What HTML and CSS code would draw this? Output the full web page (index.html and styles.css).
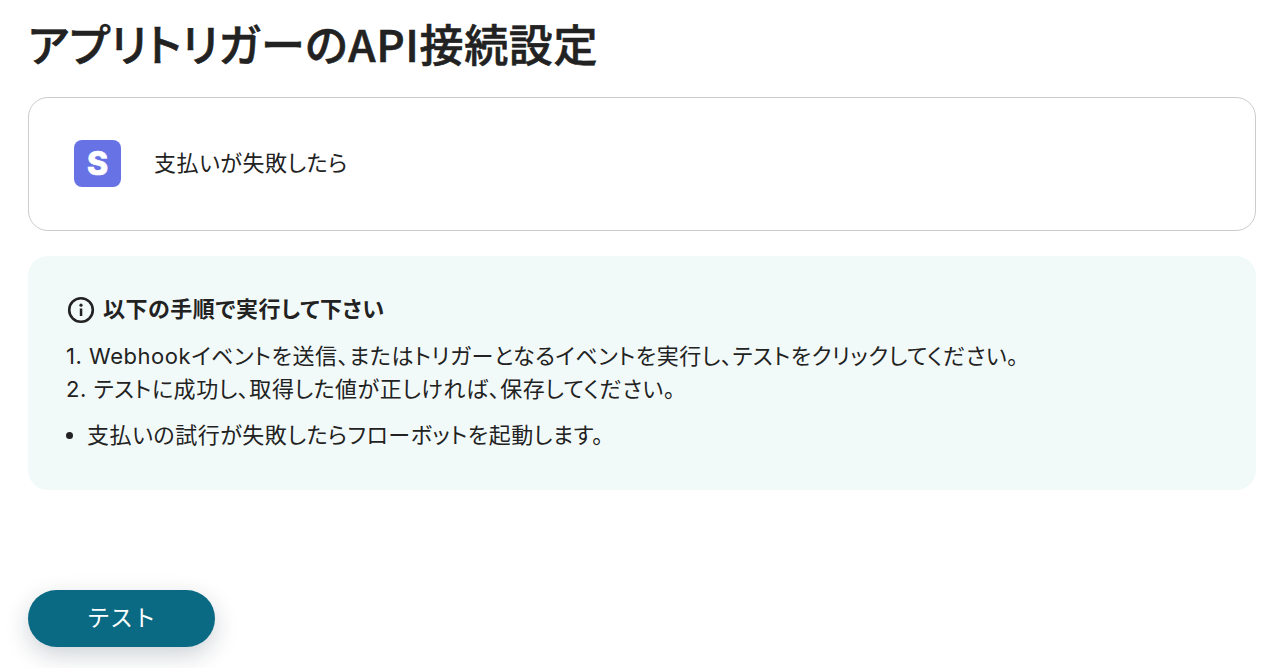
FILE: index.html
```html
<!doctype html>
<html lang="ja">
<head>
  <meta charset="utf-8">
  <title>アプリトリガーのAPI接続設定</title>
  <link rel="stylesheet" href="styles.css">
</head>
<body>
  <h1 class="page-title">アプリトリガーのAPI接続設定</h1>
  <div class="trigger-card">
    <div class="app-icon">S</div>
    <p class="trigger-name">支払いが失敗したら</p>
  </div>
  <div class="guide">
    <div class="guide-head">
      <svg class="info-icon" width="28" height="28" viewBox="0 0 28 28" fill="none">
        <circle cx="14" cy="14" r="11.8" stroke="#222" stroke-width="2.6"/>
        <rect x="12.8" y="12.5" width="2.5" height="7.5" fill="#222"/>
        <circle cx="14" cy="9.2" r="1.6" fill="#222"/>
      </svg>
      <span>以下の手順で実行して下さい</span>
    </div>
    <div class="guide-steps">
      <p>1. Webhookイベントを送信、またはトリガーとなるイベントを実行し、テストをクリックしてください。</p>
      <p>2. テストに成功し、取得した値が正しければ、保存してください。</p>
    </div>
    <ul class="guide-notes">
      <li>支払いの試行が失敗したらフローボットを起動します。</li>
    </ul>
  </div>
  <button class="test-btn" type="button">テスト</button>
</body>
</html>
```

FILE: styles.css
```css
html{
  background-color: #fff;
}
body{
  margin: 0;
  padding: 0 25px 0 28px;
  height: 668px;
  box-sizing: border-box;
  overflow: hidden;
  color: #222;
  font-family: Inter, "Noto Sans CJK JP", sans-serif;
  font-size: 22px;
  letter-spacing: 0.54px;
  font-feature-settings: "palt";
}
.page-title{
  margin: 0;
  padding-top: 13px;
  height: 97px;
  box-sizing: border-box;
  font-family: "Noto Sans CJK JP", sans-serif;
  font-size: 44px;
  line-height: 60px;
  font-weight: 500;
  -webkit-text-stroke: 0.6px #222;
  letter-spacing: 0.63px;
}
.trigger-card{
  display: flex;
  align-items: center;
  gap: 33px;
  height: 134px;
  box-sizing: border-box;
  padding-left: 45px;
  border: 1px solid #ccc;
  border-radius: 20px;
}
.app-icon{
  display: flex;
  align-items: center;
  justify-content: center;
  width: 47px;
  height: 47px;
  margin-bottom: 2px;
  border-radius: 8px;
  background-color: #6772e5;
  color: #fff;
  font-family: Inter, sans-serif;
  font-size: 32px;
  font-weight: 800;
  -webkit-text-stroke: 0.7px #fff;
  letter-spacing: 0;
}
.trigger-name{
  margin: 0 0 7px;
}
.guide{
  margin-top: 25px;
  height: 234px;
  box-sizing: border-box;
  padding: 37px 39px 0;
  border-radius: 20px;
  background-color: #f2faf9;
  line-height: 33px;
}
.guide-head{
  display: flex;
  align-items: center;
  gap: 8px;
  font-weight: 700;
}
.guide-steps{
  margin: 14px 0 0 -1px;
}
.guide-steps p{
  margin: 0;
}
.guide-notes{
  margin: 13px 0 0;
  padding-left: 20px;
}
.test-btn{
  display: block;
  margin-top: 100px;
  width: 187px;
  height: 57px;
  padding: 0 0 6px;
  border: none;
  border-radius: 29px;
  background-color: #0a6a84;
  color: #fff;
  font-family: inherit;
  font-size: 23px;
  letter-spacing: 0;
  box-shadow: 0 8px 24px rgba(0,30,50,0.2);
}
```
